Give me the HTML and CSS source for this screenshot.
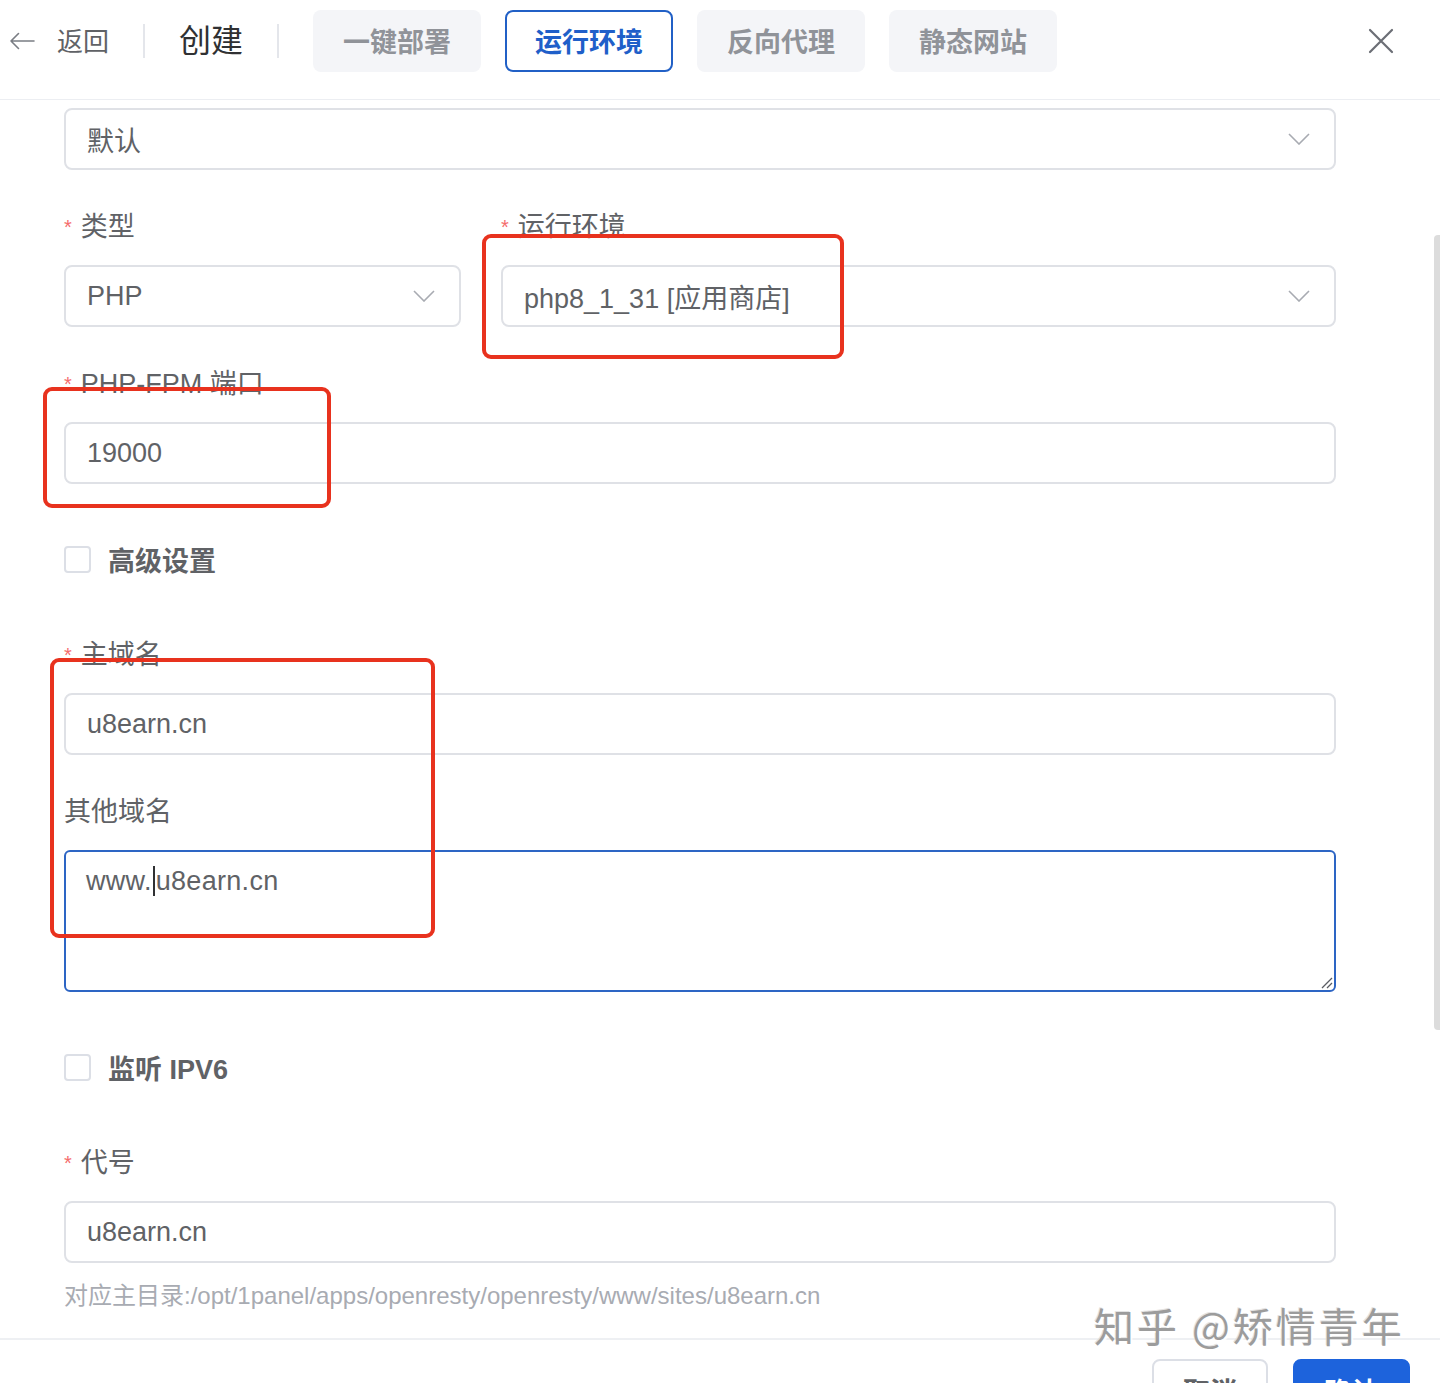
FILE: index.html
```html
<!DOCTYPE html>
<html lang="zh-CN">
<head>
<meta charset="utf-8">
<title>创建网站</title>
<link rel="stylesheet" href="styles.css">
</head>
<body>
<div class="drawer">
  <header class="hdr">
    <div class="back">
      <svg class="back-icon" width="26" height="18" viewBox="0 0 26 18"><path d="M25 9H2M9.5 1.5L2 9l7.5 7.5" fill="none" stroke="#7a7d84" stroke-width="1.6" stroke-linecap="round" stroke-linejoin="round"/></svg>
      <span class="back-text">返回</span>
    </div>
    <span class="divider"></span>
    <span class="title">创建</span>
    <span class="divider"></span>
    <nav class="tabs">
      <span class="tab">一键部署</span>
      <span class="tab active">运行环境</span>
      <span class="tab">反向代理</span>
      <span class="tab">静态网站</span>
    </nav>
    <span class="close">
      <svg width="26" height="26" viewBox="0 0 26 26"><path d="M2 2L24 24M24 2L2 24" fill="none" stroke="#6b6e75" stroke-width="2.2" stroke-linecap="round"/></svg>
    </span>
  </header>

  <main class="body">
    <div class="form">
      <div class="item">
        <div class="control select"><span class="val">默认</span>
          <svg class="chev" width="22" height="12" viewBox="0 0 22 12"><path d="M1 1l10 10L21 1" fill="none" stroke="#a8abb2" stroke-width="1.6"/></svg>
        </div>
      </div>

      <div class="row">
        <div class="item">
          <div class="label"><span class="req">*</span>类型</div>
          <div class="control select"><span class="val">PHP</span>
            <svg class="chev" width="22" height="12" viewBox="0 0 22 12"><path d="M1 1l10 10L21 1" fill="none" stroke="#a8abb2" stroke-width="1.6"/></svg>
          </div>
        </div>
        <div class="item">
          <div class="label"><span class="req">*</span>运行环境</div>
          <div class="control select"><span class="val">php8_1_31 [应用商店]</span>
            <svg class="chev" width="22" height="12" viewBox="0 0 22 12"><path d="M1 1l10 10L21 1" fill="none" stroke="#a8abb2" stroke-width="1.6"/></svg>
          </div>
        </div>
      </div>

      <div class="item">
        <div class="label"><span class="req">*</span>PHP-FPM 端口</div>
        <div class="control input"><span class="val">19000</span></div>
      </div>

      <div class="item check-item">
        <span class="checkbox"></span><span class="check-label">高级设置</span>
      </div>

      <div class="item">
        <div class="label"><span class="req">*</span>主域名</div>
        <div class="control input"><span class="val">u8earn.cn</span></div>
      </div>

      <div class="item">
        <div class="label">其他域名</div>
        <div class="textarea"><span class="val">www.<span class="caret"></span>u8earn.cn</span>
          <svg class="resize" width="14" height="14" viewBox="0 0 14 14"><path d="M13 3L3 13M13 8L8 13" fill="none" stroke="#5a5d63" stroke-width="1.3"/></svg>
        </div>
      </div>

      <div class="item check-item">
        <span class="checkbox"></span><span class="check-label">监听 IPV6</span>
      </div>

      <div class="item last">
        <div class="label"><span class="req">*</span>代号</div>
        <div class="control input"><span class="val">u8earn.cn</span></div>
        <div class="help">对应主目录:/opt/1panel/apps/openresty/openresty/www/sites/u8earn.cn</div>
      </div>
    </div>
    <div class="scroll-thumb"></div>
  </main>

  <footer class="foot">
    <span class="btn">取消</span>
    <span class="btn primary">确认</span>
  </footer>

  <div class="mark mark-1"></div>
  <div class="mark mark-2"></div>
  <div class="mark mark-3"></div>

  <div class="watermark">知乎 @矫情青年</div>
</div>
</body>
</html>
```

FILE: styles.css
```css
* { box-sizing: border-box; }

html, body {
  margin: 0;
  padding: 0;
  background: #ffffff;
}

body {
  width: 1440px;
  height: 1383px;
  overflow: hidden;
  font-family: "Liberation Sans", "Noto Sans CJK SC", sans-serif;
  color: #606266;
}

.drawer {
  position: relative;
  width: 1440px;
  height: 1383px;
  overflow: hidden;
}

/* ---------- header ---------- */
.hdr {
  height: 100px;
  border-bottom: 1px solid #eceef2;
  display: flex;
  align-items: center;
  padding: 10px 46px 28px 9px;
}

.back {
  display: flex;
  align-items: center;
  gap: 22px;
}

.back-text {
  font-size: 26px;
  line-height: 40px;
  color: #606266;
  padding-top: 2px;
}

.divider {
  width: 2px;
  height: 34px;
  background: #e4e6eb;
  margin: 0 34px;
}

.title {
  font-size: 32px;
  line-height: 44px;
  color: #303133;
}

.tabs {
  display: flex;
  gap: 24px;
}

.tab {
  width: 168px;
  height: 62px;
  border-radius: 8px;
  background: #f4f5f8;
  display: flex;
  align-items: center;
  justify-content: center;
  font-size: 27px;
  font-weight: 700;
  color: #909399;
}

.tab.active {
  background: #ffffff;
  border: 2px solid #2160c6;
  color: #1f5fc9;
}

.close {
  margin-left: auto;
  display: flex;
}

/* ---------- body ---------- */
.body {
  position: relative;
  height: 1238px;
  overflow: hidden;
  padding: 8px 104px 0 64px;
}

.form {
  width: 1272px;
}

.item {
  margin-bottom: 35px;
}

.row {
  display: grid;
  grid-template-columns: 397px 835px;
  column-gap: 40px;
}

.label {
  height: 44px;
  line-height: 44px;
  margin-bottom: 16px;
  font-size: 27px;
  color: #606266;
  white-space: nowrap;
}

.req {
  color: #f56c6c;
  font-size: 20px;
  margin-right: 9px;
  vertical-align: 2px;
}

.control {
  height: 62px;
  border: 2px solid #dfe1e6;
  border-radius: 8px;
  display: flex;
  align-items: center;
  padding: 0 24px 0 21px;
}

.val {
  font-size: 27px;
  color: #606266;
  white-space: nowrap;
}

.select {
  justify-content: space-between;
}

.chev {
  flex: none;
}

.check-item {
  height: 80px;
  margin-bottom: 34px;
  display: flex;
  align-items: center;
}

.checkbox {
  width: 27px;
  height: 27px;
  border: 2px solid #dcdfe6;
  border-radius: 4px;
  background: #fff;
  margin-right: 17px;
}

.check-label {
  font-size: 27px;
  font-weight: 700;
  color: #606266;
}

.textarea {
  position: relative;
  height: 142px;
  border: 2px solid #2d65c4;
  border-radius: 6px;
  padding: 9px 20px 0;
  line-height: 40px;
}

.textarea .val {
  letter-spacing: 0.3px;
}

.caret {
  display: inline-block;
  width: 2px;
  height: 30px;
  background: #303133;
  vertical-align: -6px;
  margin: 0 1px 0 1px;
}

.resize {
  position: absolute;
  right: 1px;
  bottom: 1px;
}

.item.last {
  margin-bottom: 0;
}

.help {
  margin-top: 16px;
  font-size: 24px;
  line-height: 34px;
  color: #a8abb2;
  white-space: nowrap;
}

.scroll-thumb {
  position: absolute;
  right: 0;
  top: 135px;
  width: 6px;
  height: 795px;
  border-radius: 4px 0 0 4px;
  background: #dcdcdc;
}

/* ---------- footer ---------- */
.foot {
  border-top: 2px solid #eef0f3;
  display: flex;
  justify-content: flex-end;
  gap: 25px;
  padding: 19px 30px 0 0;
}

.btn {
  width: 116px;
  height: 62px;
  border: 2px solid #dcdfe6;
  border-radius: 8px;
  background: #fff;
  display: flex;
  align-items: center;
  justify-content: center;
  font-size: 27px;
  font-weight: 700;
  color: #606266;
}

.btn.primary {
  width: 117px;
  background: #1d63dc;
  border-color: #1d63dc;
  color: #ffffff;
}

/* ---------- annotations ---------- */
.mark {
  position: absolute;
  border: 4px solid #e8321e;
  border-radius: 9px;
}

.mark-1 { left: 482px; top: 234px; width: 362px; height: 125px; }
.mark-2 { left: 43px; top: 387px; width: 288px; height: 121px; }
.mark-3 { left: 50px; top: 658px; width: 385px; height: 280px; }

.watermark {
  position: absolute;
  left: 1094px;
  top: 1297px;
  font-family: "Noto Sans CJK SC", sans-serif;
  font-size: 40px;
  line-height: 56px;
  color: #9c9c9c;
  letter-spacing: 3px;
  text-shadow: 2px 2px 0 rgba(255,255,255,0.9), -1px -1px 0 rgba(220,220,220,0.8);
  white-space: nowrap;
}
```
